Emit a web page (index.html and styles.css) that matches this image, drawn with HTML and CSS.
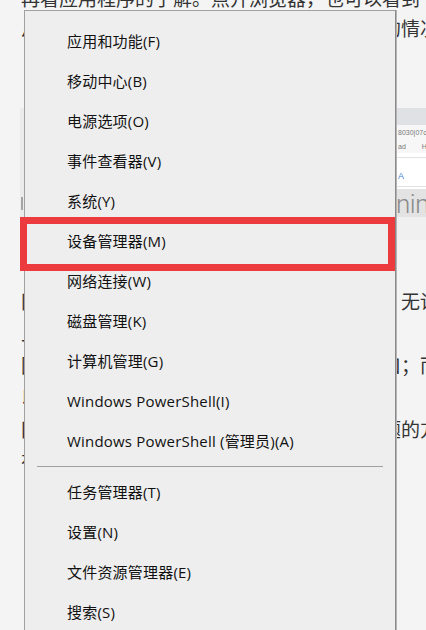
FILE: index.html
```html
<!DOCTYPE html>
<html lang="zh-CN">
<head>
<meta charset="utf-8">
<title>设备管理器</title>
<link rel="stylesheet" href="styles.css">
</head>
<body>
  <article class="post">
    <div class="intro">
      <p>再看应用程序的了解。点开浏览器，也可以看到</p>
      <p>从而查看各个应用程序占用电脑资源时用到的情况</p>
    </div>
    <div class="shot">
      <div class="shot-edge"><span class="edge-mark"></span></div>
      <div class="shot-gap"></div>
      <div class="shot-pane">
        <div class="tabbar"></div>
        <div class="addr">8030|07c9a</div>
        <div class="bookmarks"><span>ad</span><i class="folder"></i><span>H</span></div>
        <div class="page"><span class="page-box">A</span></div>
        <div class="banner">nim</div>
        <div class="rest"></div>
      </div>
    </div>
    <div class="body">
      <p>同时按下键盘上的组合键后会弹出快捷菜单，无论是</p>
      <p>上述操作都可以在桌面上完成。</p>
      <p>因此用户可以通过这个菜单快速进入对应窗口；而后续</p>
      <p>以上就是打开设备管理器的方法。</p>
      <p>网上也有很多介绍如何解决电脑驱动程序问题的方法</p>
      <p>有需要的朋友可以参考一下。</p>
    </div>
  </article>

  <nav class="menu">
    <div class="item">应用和功能(F)</div>
    <div class="item">移动中心(B)</div>
    <div class="item">电源选项(O)</div>
    <div class="item">事件查看器(V)</div>
    <div class="item">系统(Y)</div>
    <div class="item">设备管理器(M)</div>
    <div class="item">网络连接(W)</div>
    <div class="item">磁盘管理(K)</div>
    <div class="item">计算机管理(G)</div>
    <div class="item">Windows PowerShell(I)</div>
    <div class="item">Windows PowerShell (管理员)(A)</div>
    <div class="sep"></div>
    <div class="item">任务管理器(T)</div>
    <div class="item">设置(N)</div>
    <div class="item">文件资源管理器(E)</div>
    <div class="item">搜索(S)</div>
    <div class="item">关机或注销(U)</div>
  </nav>

  <div class="mark"></div>
</body>
</html>
```

FILE: styles.css
```css
html, body {
  margin: 0;
  height: 100%;
}

body {
  position: relative;
  overflow: hidden;
  display: flow-root;
  background: #f4f4f4;
}

.post {
  display: flow-root;
  padding-left: 21px;
  color: #333333;
  font-family: "Noto Sans CJK SC", sans-serif;
  font-size: 19px;
  line-height: 32px;
  white-space: nowrap;
}

.post p {
  margin: 0;
}

.intro {
  margin-top: -17px;
  line-height: 30px;
}

.shot {
  margin: 65px 0 0 -1px;
  height: 132px;
  display: grid;
  grid-template-columns: 4px 371px 1fr;
  font-family: "Liberation Sans", sans-serif;
}

.shot-edge {
  background: #ebebeb;
  display: flex;
  flex-direction: column;
  justify-content: flex-end;
  padding-bottom: 30px;
}

.edge-mark {
  display: block;
  width: 2px;
  height: 13px;
  margin-left: 1px;
  background: #a5a5a5;
}

.shot-pane {
  display: flex;
  flex-direction: column;
  overflow: hidden;
}

.tabbar {
  height: 17px;
  background: #dfe1e5;
}

.addr {
  height: 15px;
  background: #f7f7f7;
  color: #7a7a7a;
  font-size: 7px;
  line-height: 15px;
  padding-left: 3px;
}

.bookmarks {
  height: 13px;
  background: #f7f7f7;
  color: #777777;
  font-size: 7px;
  line-height: 13px;
  display: flex;
  align-items: center;
  gap: 8px;
  padding-left: 3px;
}

.folder {
  width: 5px;
  height: 6px;
  background: #f2c744;
}

.page {
  height: 36px;
  background: #ffffff;
  padding-top: 4px;
  box-sizing: border-box;
}

.page-box {
  display: block;
  height: 28px;
  margin-left: -6px;
  width: 40px;
  border: 1px solid #e2e2e2;
  border-radius: 8px;
  color: #4a7fd0;
  font-size: 9px;
  line-height: 36px;
  padding-left: 8px;
}

.banner {
  height: 28px;
  background: #e3e3e3;
  color: #8a8a8a;
  font-family: Roboto, sans-serif;
  font-weight: 300;
  font-size: 26px;
  line-height: 30px;
  letter-spacing: -0.5px;
  padding-left: 1px;
}

.rest {
  flex: 1;
  background: #f0f0f0;
}

.body {
  margin-top: 45px;
}

.menu {
  position: absolute;
  left: 24px;
  top: 10px;
  width: 370px;
  padding-top: 11px;
  background: #eeeeee;
  border: 1px solid #a0a0a0;
  border-right-color: #8a8a8a;
  border-bottom: none;
  box-shadow: 1px 0 0 #b4b4b4;
  font-family: "Open Sans", "Noto Sans CJK SC", sans-serif;
  font-size: 15px;
  letter-spacing: 0.2px;
  color: #111111;
}

.item {
  box-sizing: border-box;
  height: 40px;
  padding: 0 0 3px 42px;
  display: flex;
  align-items: center;
  white-space: nowrap;
}

.sep {
  height: 1px;
  margin: 4px 12px 6px;
  background: #a0a0a0;
}

.mark {
  position: absolute;
  left: 20px;
  top: 217px;
  width: 375px;
  height: 54px;
  box-sizing: border-box;
  border: 7px solid #ec3b3f;
}
```
